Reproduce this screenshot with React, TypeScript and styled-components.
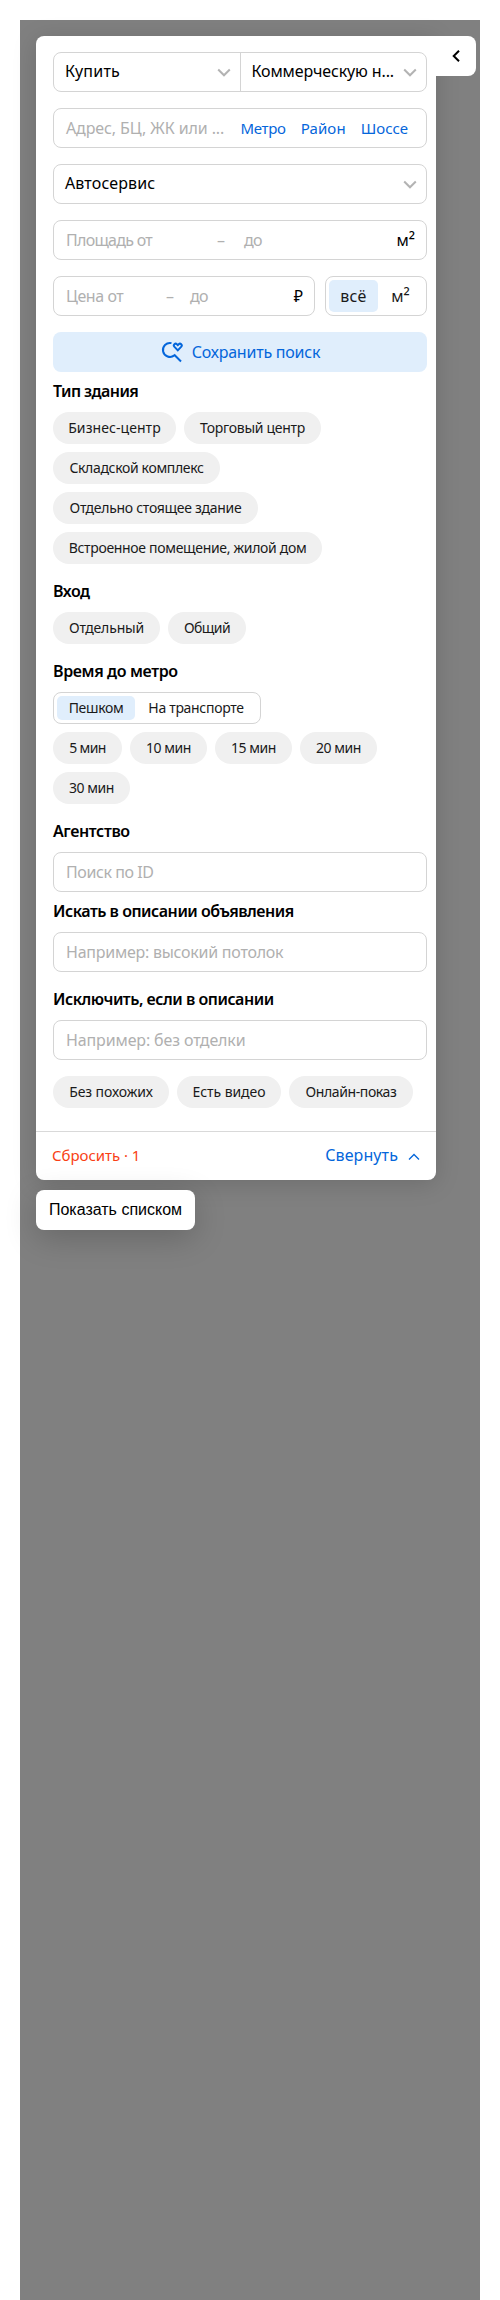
import React from 'react';
import styled, { createGlobalStyle } from 'styled-components';

const GlobalStyle = createGlobalStyle`
  * { box-sizing: border-box; }
  body { margin: 0; background: #fff; }
  button { border: 0; padding: 0; background: none; color: inherit; font: inherit; cursor: pointer; }
`;

const Page = styled.main`
  min-height: 2300px;
  padding: 20px 20px 0;
  font-family: 'Noto Sans', sans-serif;
  font-size: 16px;
  line-height: 20px;
  color: #000;
  display: flex;
`;

const MapArea = styled.div`
  flex: 1;
  background: #808080;
  padding: 16px 0 0 16px;
  display: flex;
  flex-direction: column;
  align-items: flex-start;
  gap: 10px;
`;

const PanelRow = styled.div`
  display: flex;
  align-items: flex-start;
`;

const Panel = styled.section`
  width: 400px;
  height: 1144px;
  background: #fff;
  border-radius: 8px 0 8px 8px;
  box-shadow: 0 4px 24px rgba(0, 0, 0, 0.15);
  display: flex;
  flex-direction: column;
`;

const CollapseTab = styled.button`
  width: 40px;
  height: 40px;
  background: #fff;
  border-radius: 0 8px 8px 0;
  position: relative;
  display: flex;
  align-items: center;
  justify-content: center;
  padding-right: 1px;
`;

const Filters = styled.div`
  flex: 1;
  padding: 16px 9px 0 17px;
  display: flex;
  flex-direction: column;
`;

const MainFields = styled.div`
  display: grid;
  gap: 16px;
`;

const FieldRow = styled.div`
  display: flex;
  gap: 10px;
`;

const Text = styled.span<{ $ls?: number }>`
  letter-spacing: ${(p) => p.$ls ?? 0}px;
  white-space: nowrap;
`;

const Square = styled.span`
  font-size: 18px;
  line-height: 0;
  vertical-align: -1px;
`;

const Field = styled.div`
  flex: 1;
  height: 40px;
  border: 1px solid #d4d4d4;
  border-radius: 8px;
  background: #fff;
  display: flex;
  align-items: center;
  padding: 0 11px 0 12px;
`;

const Placeholder = styled(Text)<{ $width?: number }>`
  color: #b0b0b0;
  ${(p) => (p.$width ? `width: ${p.$width}px;` : '')}
`;

const Unit = styled(Text)`
  margin-left: auto;
`;

const SelectGroup = styled.div`
  height: 40px;
  border: 1px solid #d4d4d4;
  border-radius: 8px;
  display: flex;
`;

const Select = styled.button`
  flex: 1;
  display: flex;
  align-items: center;
  justify-content: space-between;
  padding: 0 9px 2px 11px;
  & + & {
    border-left: 1px solid #d4d4d4;
  }
  svg { margin-top: 4px; }
`;

const GeoLinks = styled.div`
  display: flex;
  margin-left: auto;
  gap: 15px;
  padding-right: 7px;
  font-size: 15px;
  color: #0466db;
`;

const Segments = styled.div<{ $width: number; $small?: boolean }>`
  width: ${(p) => p.$width}px;
  height: ${(p) => (p.$small ? 32 : 40)}px;
  border: 1px solid #d4d4d4;
  border-radius: 8px;
  padding: 3px;
  display: flex;
  font-size: ${(p) => (p.$small ? 14 : 16)}px;
`;

const Segment = styled.button<{ $width: number; $active?: boolean }>`
  width: ${(p) => p.$width}px;
  border-radius: 5px;
  background: ${(p) => (p.$active ? '#e0eefc' : 'transparent')};
  color: #1a1a1a;
  padding-bottom: 1px;
`;

const SaveButton = styled.button`
  height: 40px;
  border-radius: 8px;
  background: #e0eefc;
  color: #0466db;
  display: flex;
  align-items: center;
  justify-content: center;
  gap: 8px;
`;

const Group = styled.section<{ $after?: number }>`
  margin-bottom: ${(p) => p.$after ?? 8}px;
`;

const Heading = styled.h3`
  margin: 0;
  height: 40px;
  padding-top: 9px;
  font-size: 16px;
  line-height: 20px;
  font-weight: 600;
`;

const Chips = styled.div`
  display: flex;
  flex-wrap: wrap;
  gap: 8px;
`;

const Chip = styled.button<{ $width: number }>`
  width: ${(p) => p.$width}px;
  height: 32px;
  border-radius: 16px;
  background: #f0f0f0;
  color: #1a1a1a;
  font-size: 14px;
`;

const Footer = styled.footer`
  height: 49px;
  border-top: 1px solid #d9d9d9;
  display: flex;
  align-items: center;
  justify-content: space-between;
  padding: 0 16px 2px;
`;

const Reset = styled.button`
  color: #f93f15;
  font-size: 15px;
`;

const Fold = styled.button`
  color: #0466db;
  display: flex;
  align-items: center;
  gap: 10px;
  svg { margin-top: 3px; }
`;

const ListButton = styled.button`
  width: 159px;
  height: 40px;
  border-radius: 8px;
  background: #fff;
  box-shadow: 0 8px 32px rgba(0, 0, 0, 0.2);
  font-family: 'Liberation Sans', Arial, sans-serif;
  font-size: 16px;
`;

const Arrow = () => (
  <svg width="14" height="10" viewBox="0 0 14 10" fill="none" stroke="#b3b3b3" strokeWidth="2">
    <path d="M1.2 1.5 7 7.3l5.800-5.800" />
  </svg>
);

const SearchHeart = () => (
  <svg width="24" height="24" viewBox="0 0 24 24" fill="none" stroke="#0466db" strokeWidth="2">
    <path d="M11.500 3.100A7 7 0 1 0 14.300 15.400M14 14.500l7 7" />
    <path d="M17.800 10.400l-3.500-3.700c-1.500-1.700.9-4 2.600-2.500l.9.9.9-.9c1.700-1.500 4.100.8 2.600 2.500z" />
  </svg>
);

type Option = [label: string, width: number, spacing: number];

const buildingTypes: Option[] = [
  ['Бизнес-центр', 123, 0.07],
  ['Торговый центр', 137, -0.28],
  ['Складской комплекс', 167, -0.34],
  ['Отдельно стоящее здание', 205, -0.29],
  ['Встроенное помещение, жилой дом', 269, -0.32],
];
const entrances: Option[] = [
  ['Отдельный', 107, -0.15],
  ['Общий', 78, -0.57],
];
const times: Option[] = [
  ['5 мин', 69, -0.6],
  ['10 мин', 77, -0.45],
  ['15 мин', 77, -0.45],
  ['20 мин', 77, -0.45],
  ['30 мин', 77, -0.45],
];
const extras: Option[] = [
  ['Без похожих', 116, -0.09],
  ['Есть видео', 104, -0.07],
  ['Онлайн-показ', 124, -0.4],
];

const ChipList = ({ items }: { items: Option[] }) => (
  <Chips>
    {items.map(([label, width, spacing]) => (
      <Chip key={label} $width={width}>
        <Text $ls={spacing}>{label}</Text>
      </Chip>
    ))}
  </Chips>
);

export default function App() {
  return (
    <Page>
      <GlobalStyle />
      <MapArea>
        <PanelRow>
          <Panel>
            <Filters>
              <MainFields>
                <SelectGroup>
                  <Select>
                    <Text $ls={0.19}>Купить</Text>
                    <Arrow />
                  </Select>
                  <Select>
                    <Text $ls={-0.12}>Коммерческую н...</Text>
                    <Arrow />
                  </Select>
                </SelectGroup>
                <Field>
                  <Placeholder $ls={-0.1}>Адрес, БЦ, ЖК или ...</Placeholder>
                  <GeoLinks>
                    <Text $ls={-0.29}>Метро</Text>
                    <Text $ls={0.1}>Район</Text>
                    <Text $ls={0.02}>Шоссе</Text>
                  </GeoLinks>
                </Field>
                <SelectGroup>
                  <Select>
                    <Text $ls={0.14}>Автосервис</Text>
                    <Arrow />
                  </Select>
                </SelectGroup>
                <Field>
                  <Placeholder $ls={-0.72} $width={151}>Площадь от</Placeholder>
                  <Placeholder $width={27}>–</Placeholder>
                  <Placeholder $ls={-0.71}>до</Placeholder>
                  <Unit>м<Square>²</Square></Unit>
                </Field>
                <FieldRow>
                  <Field>
                    <Placeholder $ls={-0.42} $width={100}>Цена от</Placeholder>
                    <Placeholder $width={24}>–</Placeholder>
                    <Placeholder $ls={-0.71}>до</Placeholder>
                    <Unit>₽</Unit>
                  </Field>
                  <Segments $width={102}>
                    <Segment $width={50} $active>
                      <Text $ls={0.29}>всё</Text>
                    </Segment>
                    <Segment $width={46}>
                      <Text>м<Square>²</Square></Text>
                    </Segment>
                  </Segments>
                </FieldRow>
                <SaveButton>
                  <SearchHeart />
                  <Text $ls={-0.22}>Сохранить поиск</Text>
                </SaveButton>
              </MainFields>
              <Group>
                <Heading><Text $ls={-0.57}>Тип здания</Text></Heading>
                <ChipList items={buildingTypes} />
              </Group>
              <Group>
                <Heading><Text $ls={-0.5}>Вход</Text></Heading>
                <ChipList items={entrances} />
              </Group>
              <Group>
                <Heading><Text $ls={-0.37}>Время до метро</Text></Heading>
                <Group>
                  <Segments $width={208} $small>
                    <Segment $width={78} $active>
                      <Text $ls={-0.33}>Пешком</Text>
                    </Segment>
                    <Segment $width={122}>
                      <Text $ls={-0.31}>На транспорте</Text>
                    </Segment>
                  </Segments>
                </Group>
                <ChipList items={times} />
              </Group>
              <Group $after={0}>
                <Heading><Text $ls={-0.38}>Агентство</Text></Heading>
                <Field><Placeholder $ls={-0.42}>Поиск по ID</Placeholder></Field>
              </Group>
              <Group>
                <Heading><Text $ls={-0.48}>Искать в описании объявления</Text></Heading>
                <Field><Placeholder $ls={-0.25}>Например: высокий потолок</Placeholder></Field>
              </Group>
              <Group $after={16}>
                <Heading><Text $ls={-0.48}>Исключить, если в описании</Text></Heading>
                <Field><Placeholder $ls={-0.13}>Например: без отделки</Placeholder></Field>
              </Group>
              <ChipList items={extras} />
            </Filters>
            <Footer>
              <Reset><Text $ls={-0.05}>Сбросить · 1</Text></Reset>
              <Fold>
                <Text $ls={0.11}>Свернуть</Text>
                <svg width="12" height="8" viewBox="0 0 12 8" fill="none" stroke="currentColor" strokeWidth="1.3">
                  <path d="M1 6.500 6 1.500l5 5" />
                </svg>
              </Fold>
            </Footer>
          </Panel>
          <CollapseTab aria-label="Скрыть">
            <svg width="8" height="12" viewBox="0 0 8 12" fill="none" stroke="#000" strokeWidth="2">
              <path d="M7 .7 1.700 6 7 11.300" />
            </svg>
          </CollapseTab>
        </PanelRow>
        <ListButton>Показать списком</ListButton>
      </MapArea>
    </Page>
  );
}
